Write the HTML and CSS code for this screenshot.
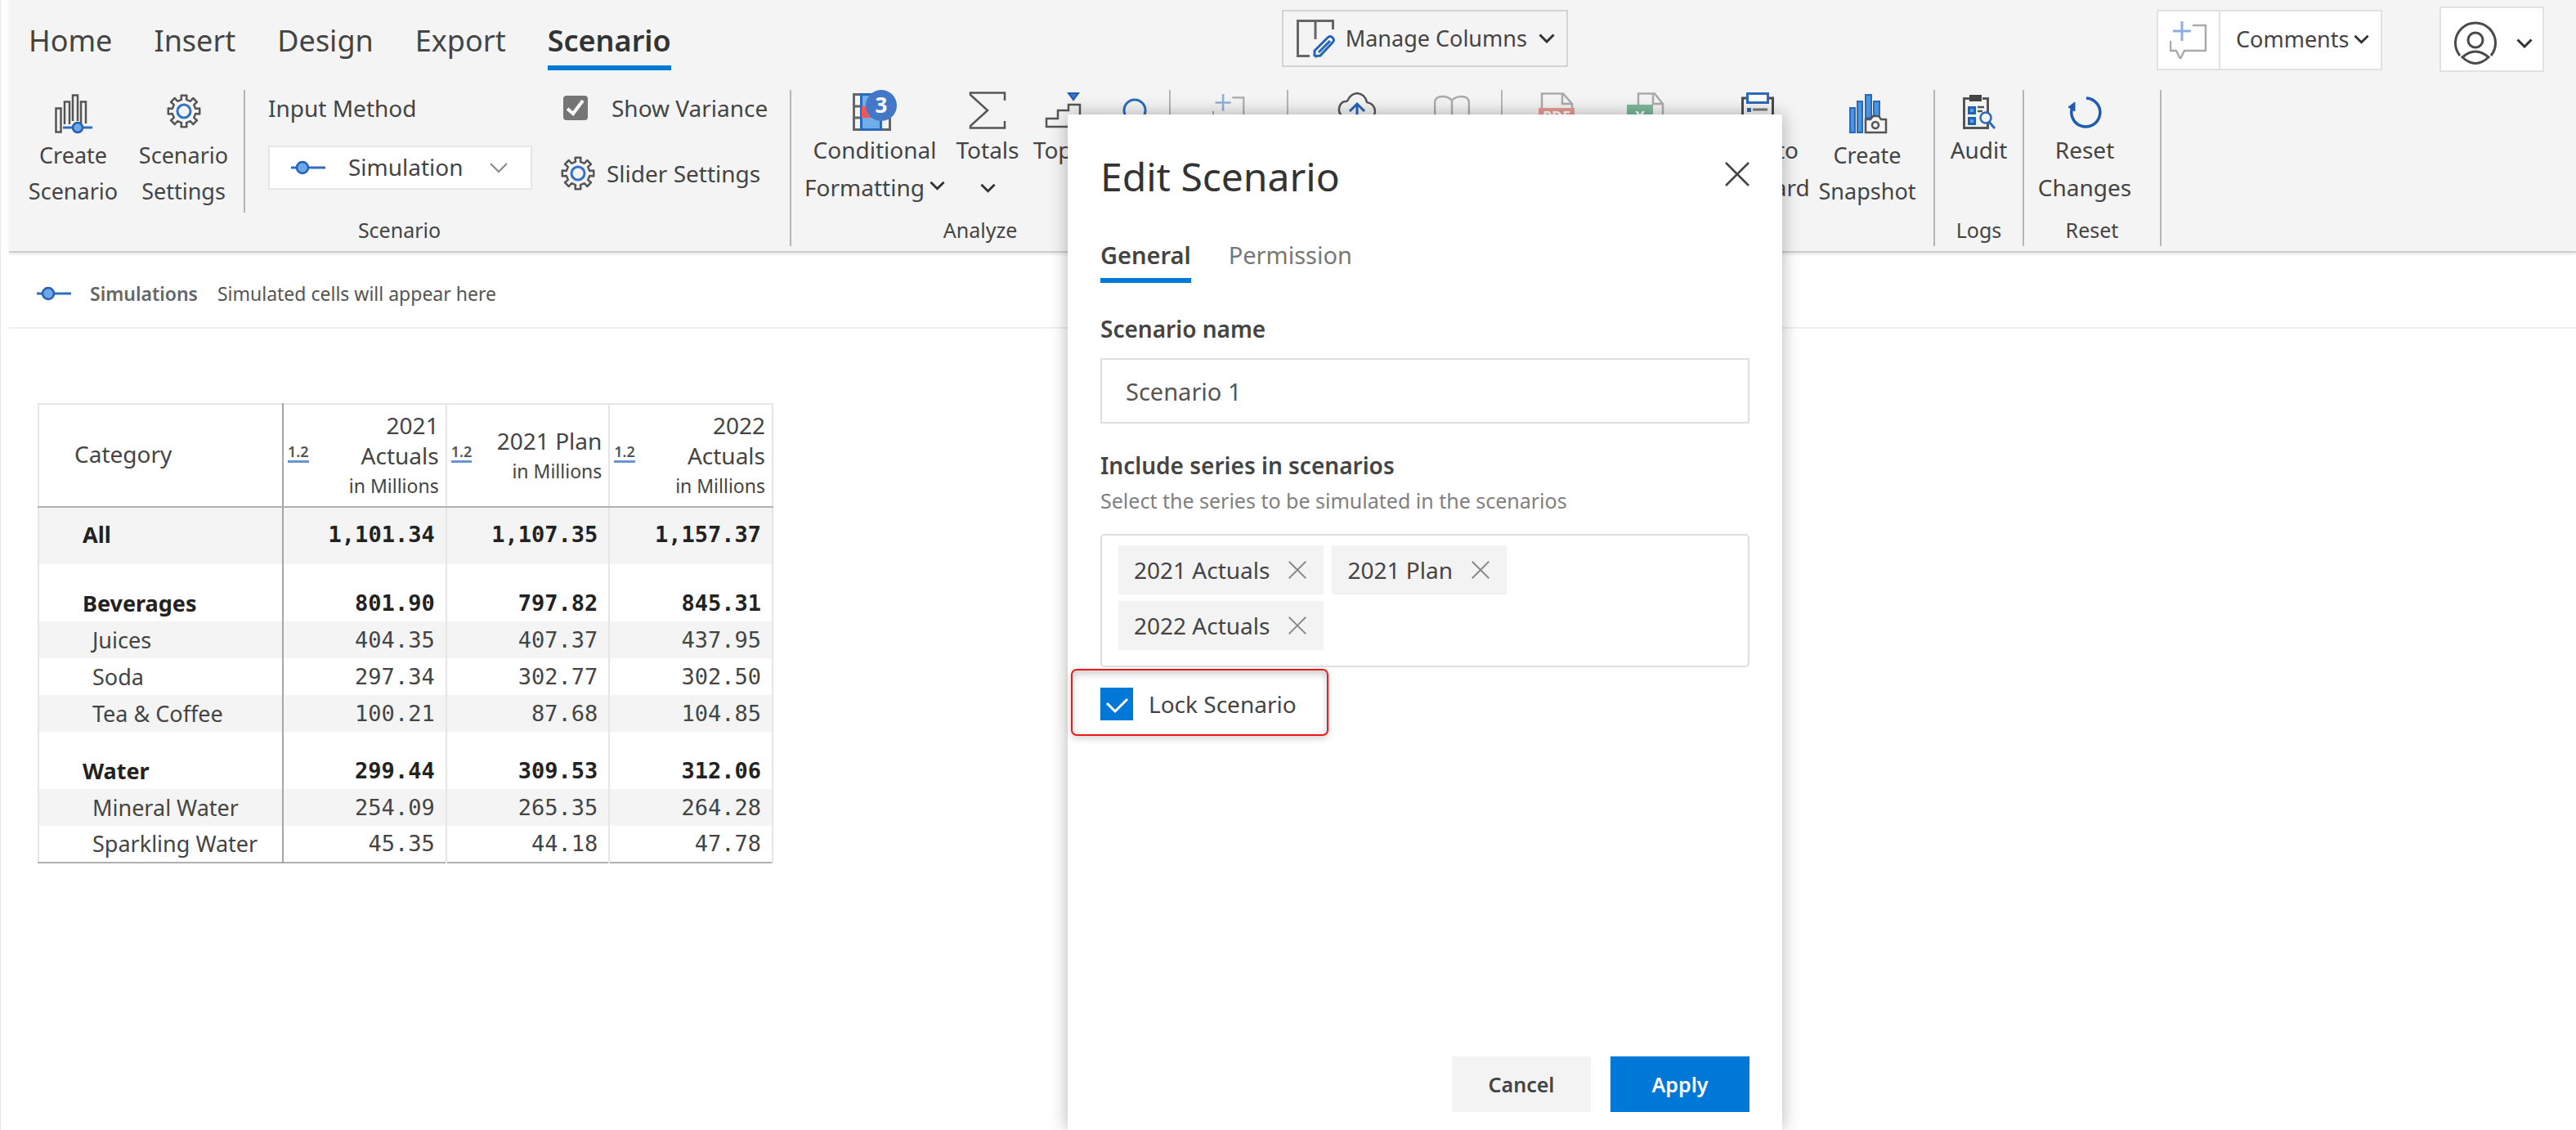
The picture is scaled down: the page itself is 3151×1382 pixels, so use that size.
FILE: index.html
```html
<!DOCTYPE html>
<html lang="en">
<head>
<meta charset="utf-8">
<title>Edit Scenario</title>
<link rel="stylesheet" href="styles.css">
</head>
<body>
<svg class="defs" aria-hidden="true">
  <symbol id="chevron" viewBox="0 0 20 12"><path d="M1.500 1.500 10 10l8.500-8.500" fill="none" stroke="currentColor" stroke-width="3"/></symbol>
  <symbol id="cross" viewBox="0 0 30 30"><path d="M1 1l28 28M29 1 1 29" fill="none" stroke="currentColor" stroke-width="2.500"/></symbol>
  <symbol id="slider" viewBox="0 0 42 18"><path d="M0 9h42" stroke="#2f6dc0" stroke-width="3"/><circle cx="14" cy="9" r="7" fill="#6aa8e8" stroke="#2560b4" stroke-width="2.500"/></symbol>
  <symbol id="gear" viewBox="0 0 42 42"><path d="M18 6.800 17.600 1.800 24.400 1.800 24 6.800 28.900 8.800 32.200 5 37 9.800 33.200 13.100 35.200 18 40.200 17.600 40.200 24.400 35.200 24 33.200 28.900 37 32.200 32.200 37 28.900 33.200 24 35.200 24.400 40.200 17.600 40.200 18 35.200 13.100 33.200 9.800 37 5 32.200 8.800 28.900 6.800 24 1.800 24.400 1.800 17.600 6.800 18 8.800 13.100 5 9.800 9.800 5 13.100 8.800z" fill="none" stroke="#555" stroke-width="2.500" stroke-linejoin="round"/><circle cx="21" cy="21" r="8" fill="none" stroke="#3272c4" stroke-width="3"/></symbol>
  <symbol id="comment-plus" viewBox="0 0 46 46"><path d="M28 5h16v31H18l-5 10-5-10H1V24" fill="none" stroke="#aaa" stroke-width="2.500"/><path d="M15 0v24M4 12h22" stroke="#8fb0dc" stroke-width="3"/></symbol>
</svg>

<header class="ribbon">
  <div class="topbar">
    <nav class="tabs" aria-label="Ribbon">
      <a href="#home">Home</a>
      <a href="#insert">Insert</a>
      <a href="#design">Design</a>
      <a href="#export">Export</a>
      <a href="#scenario" class="active">Scenario</a>
    </nav>
    <button class="manage">
      <svg width="46" height="46" viewBox="0 0 46 46"><path d="M16 44.500H1.500v-43h43V12M23 2v22" fill="none" stroke="#666" stroke-width="3"/><path d="M22 45v-7l16-16q3-3 6 0t0 6L29 44l-7 1M27 40l14-14" fill="none" stroke="#2563b5" stroke-width="3"/></svg>
      <span>Manage Columns</span>
      <svg class="chev" width="20" height="12"><use href="#chevron"/></svg>
    </button>
    <div class="comments">
      <button class="add-comment" aria-label="Add comment"><svg width="46" height="46"><use href="#comment-plus"/></svg></button>
      <button class="comments-menu">Comments <svg class="chev" width="19" height="12"><use href="#chevron"/></svg></button>
    </div>
    <button class="account" aria-label="Account">
      <svg width="52" height="54" viewBox="0 0 52 54"><g fill="none" stroke="#4a4a4a" stroke-width="3"><path d="M7 42a24.500 24.500 0 1 1 38 0"/><circle cx="26" cy="23" r="9"/><path d="M10 44q16-14 32 0-16 15-32 0z"/></g></svg>
      <svg class="chev" width="20" height="12"><use href="#chevron"/></svg>
    </button>
  </div>

  <div class="groups">
    <section class="group g-scenario">
      <div class="tools">
        <button class="tool snug w135"><span class="pic"><svg width="46" height="48" viewBox="0 0 46 48"><g fill="none" stroke="#555" stroke-width="2.500"><path d="M1.500 17.500h6v29h-6zM12 37V9.500h6V37M22 33V1.500h6V33M32 36V9.500h6V36"/></g><path d="M10 41h36" stroke="#2f6dc0" stroke-width="3"/><circle cx="28" cy="41" r="6" fill="#6aa8e8" stroke="#2560b4" stroke-width="2.500"/></svg></span>Create<br>Scenario</button>
        <button class="tool snug w135"><span class="pic up"><svg width="42" height="42"><use href="#gear"/></svg></span>Scenario<br>Settings</button>
        <div class="divider"></div>
        <div class="method">
          <label for="method">Input Method</label>
          <div class="select">
            <svg width="42" height="18"><use href="#slider"/></svg>
            <select id="method"><option>Simulation</option></select>
            <svg width="22" height="12" viewBox="0 0 22 12"><path d="M1 1l10 10L21 1" fill="none" stroke="#888" stroke-width="2"/></svg>
          </div>
        </div>
        <div class="options">
          <label class="check"><input type="checkbox" checked><span>Show Variance</span></label>
          <button class="slider-settings"><svg width="42" height="42"><use href="#gear"/></svg>Slider Settings</button>
        </div>
      </div>
      <h2>Scenario</h2>
    </section>

    <section class="group g-analyze">
      <div class="tools">
        <button class="tool w176"><span class="pic"><svg width="54" height="50" viewBox="0 0 54 50"><path d="M1.500 5.500h44v43h-44zM1 20h44M1 34h44" fill="none" stroke="#666" stroke-width="3"/><path d="M10.500 5.500h24v43h-24z" fill="#6faee8" stroke="#2a69bc" stroke-width="3"/><path d="M11 20h22v14H11z" fill="#f0595c"/><circle cx="35" cy="19" r="19" fill="#4377c8"/><text x="35" y="28" text-anchor="middle" class="badge">3</text></svg></span>Conditional<br><span class="line">Formatting<svg class="chev" width="19" height="12"><use href="#chevron"/></svg></span></button>
        <button class="tool w100"><span class="pic"><svg width="46" height="46" viewBox="0 0 46 46"><path d="M44 11V1.500H2V4l21 19L2 42v2.500h42V36" fill="none" stroke="#555" stroke-width="2.500"/></svg></span>Totals<br><svg class="chev" width="19" height="12"><use href="#chevron"/></svg></button>
        <button class="tool w84"><span class="pic"><svg width="44" height="44" viewBox="0 0 44 44"><path d="M2 42V32h14V22h13V15h14v27z" fill="none" stroke="#555" stroke-width="2.500"/><path d="M29 1h12l-6 8z" fill="#3a76c6" stroke="#1f5cb0" stroke-width="2"/></svg></span>Top n</button>
        <button class="tool w92" aria-label="Search"><span class="pic"><svg width="40" height="30" viewBox="0 0 40 30"><circle cx="20" cy="15" r="13" fill="none" stroke="#2a69bc" stroke-width="3"/></svg></span></button>
      </div>
      <h2>Analyze</h2>
    </section>

    <section class="group g-note">
      <div class="tools center"><button class="tool w92" aria-label="Add note"><span class="pic"><svg width="40" height="40"><use href="#comment-plus"/></svg></span></button></div>
    </section>

    <section class="group g-publish">
      <div class="tools">
        <button class="tool w116" aria-label="Upload"><span class="pic"><svg width="46" height="44" viewBox="0 0 46 44"><path d="M12 32q-12-2-11-13 2-8 8-8 2 0 3-2Q15 2 23 1q10 1 12 11 10 2 10 12-1 8-10 8" fill="none" stroke="#555" stroke-width="2.500"/><path d="M23 42V14M14 23l9-9 9 9" fill="none" stroke="#2563b5" stroke-width="3"/></svg></span></button>
        <button class="tool w116" aria-label="Guide"><span class="pic"><svg width="46" height="36" viewBox="0 0 46 38"><path d="M23 36V6Q18 1 11 1 1 1 1 9v27h44V9q0-8-10-8-7 0-12 5" fill="none" stroke="#aaa" stroke-width="2.500"/></svg></span></button>
      </div>
    </section>

    <section class="group g-export">
      <div class="tools">
        <button class="tool w108" aria-label="Export PDF"><span class="pic"><svg width="46" height="44" viewBox="0 0 46 44"><path d="M5 19V1.500h26L42 14v5M30 2v12h12" fill="none" stroke="#aaa" stroke-width="2.500"/><path d="M1 19h44v22H1z" fill="#e79a94"/><text x="23" y="36" text-anchor="middle" class="file-type">PDF</text></svg></span></button>
        <button class="tool w108" aria-label="Export Excel"><span class="pic"><svg width="46" height="44" viewBox="0 0 46 44"><path d="M15 15V1.500h20L45 14v28H15M33 2v12h12" fill="none" stroke="#aaa" stroke-width="2.500"/><path d="M1 15h32v26H1z" fill="#7cb99a"/><text x="17" y="36" text-anchor="middle" class="file-type">X</text></svg></span></button>
        <button class="tool clipboard w148"><span class="pic"><svg width="40" height="44" viewBox="0 0 40 44"><path d="M7 7H1.500v36h37V7H33" fill="none" stroke="#4a4a4a" stroke-width="3"/><path d="M7.500 1.500h25v11h-25z" fill="#fff" stroke="#2a69bc" stroke-width="3"/><path d="M7 19h5v5H7z" fill="#2a69bc"/><path d="M14 21h18M14 32h18" stroke="#777" stroke-width="3"/></svg></span>Copy to<br>Clipboard</button>
        <button class="tool snug w120"><span class="pic"><svg width="46" height="48" viewBox="0 0 46 48"><g fill="#4a94e0" stroke="#2a69bc" stroke-width="2"><path d="M2 17h6v30H2zM11 9h6v38h-6zM21 1h7v28h-7zM31 9h7v18h-7z"/></g><path d="M21 31h6l3-4h7l3 4h6v16H21z" fill="#f4f4f4" stroke="#555" stroke-width="2.500"/><circle cx="33" cy="38" r="4" fill="none" stroke="#555" stroke-width="2.500"/></svg></span>Create<br>Snapshot</button>
      </div>
    </section>

    <section class="group g-logs">
      <div class="tools center"><button class="tool w92"><span class="pic low"><svg width="40" height="42" viewBox="0 0 40 42"><path d="M8 4.500H1.500v36h29V4.500H24" fill="none" stroke="#555" stroke-width="3"/><path d="M8 0h15v8H8z" fill="#444"/><path d="M7.500 15.500h7v7h-7zM7.500 28.500h7v7h-7z" fill="#5ba2ea" stroke="#2060b8" stroke-width="3"/><path d="M18 15h8M18 20h6" stroke="#555" stroke-width="2.500"/><circle cx="28" cy="28" r="6.500" fill="#f4f4f4" stroke="#2a69bc" stroke-width="2.500"/><path d="M32 33l7 8" stroke="#2a69bc" stroke-width="3"/></svg></span>Audit</button></div>
      <h2>Logs</h2>
    </section>

    <section class="group g-reset">
      <div class="tools"><button class="tool w148"><span class="pic low"><svg width="40" height="40" viewBox="0 0 40 40"><path d="M22 3a17.500 17.500 0 1 1-16 9" fill="none" stroke="#1d5cb0" stroke-width="3.500"/><path d="M0 14 8 8v11z" fill="#1d5cb0" stroke="#1d5cb0"/></svg></span>Reset<br>Changes</button></div>
      <h2>Reset</h2>
    </section>
  </div>
</header>

<div class="sim-bar">
  <svg width="42" height="18"><use href="#slider"/></svg>
  <strong>Simulations</strong>
  <span>Simulated cells will appear here</span>
</div>

<main>
  <table>
    <colgroup><col class="c-name"><col class="c-num"><col class="c-num"><col class="c-num"></colgroup>
    <thead>
      <tr>
        <th scope="col">Category</th>
        <th scope="col"><div class="head"><span class="fmt">1.2</span><span class="series">2021<br>Actuals<small>in Millions</small></span></div></th>
        <th scope="col"><div class="head"><span class="fmt">1.2</span><span class="series">2021 Plan<small>in Millions</small></span></div></th>
        <th scope="col"><div class="head"><span class="fmt">1.2</span><span class="series">2022<br>Actuals<small>in Millions</small></span></div></th>
      </tr>
    </thead>
    <tbody>
      <tr class="total shade"><th scope="row">All</th><td>1,101.34</td><td>1,107.35</td><td>1,157.37</td></tr>
      <tr class="sum"><th scope="row">Beverages</th><td>801.90</td><td>797.82</td><td>845.31</td></tr>
      <tr class="shade"><th scope="row">Juices</th><td>404.35</td><td>407.37</td><td>437.95</td></tr>
      <tr><th scope="row">Soda</th><td>297.34</td><td>302.77</td><td>302.50</td></tr>
      <tr class="shade"><th scope="row">Tea &amp; Coffee</th><td>100.21</td><td>87.68</td><td>104.85</td></tr>
      <tr class="sum"><th scope="row">Water</th><td>299.44</td><td>309.53</td><td>312.06</td></tr>
      <tr class="shade"><th scope="row">Mineral Water</th><td>254.09</td><td>265.35</td><td>264.28</td></tr>
      <tr><th scope="row">Sparkling Water</th><td>45.35</td><td>44.18</td><td>47.78</td></tr>
    </tbody>
  </table>
</main>

<div class="dialog" role="dialog" aria-labelledby="dialog-title">
  <div class="dialog-head">
    <h1 id="dialog-title">Edit Scenario</h1>
    <button class="close" aria-label="Close"><svg width="30" height="30"><use href="#cross"/></svg></button>
  </div>
  <nav class="dialog-tabs" aria-label="Sections">
    <a href="#general" class="active">General</a>
    <a href="#permission">Permission</a>
  </nav>
  <label class="field-label" for="name">Scenario name</label>
  <input id="name" class="name" type="text" value="Scenario 1">
  <h3 class="field-label">Include series in scenarios</h3>
  <p>Select the series to be simulated in the scenarios</p>
  <div class="chips">
    <span class="chip">2021 Actuals<button aria-label="Remove 2021 Actuals"><svg width="22" height="22"><use href="#cross"/></svg></button></span>
    <span class="chip">2021 Plan<button aria-label="Remove 2021 Plan"><svg width="22" height="22"><use href="#cross"/></svg></button></span>
    <span class="chip">2022 Actuals<button aria-label="Remove 2022 Actuals"><svg width="22" height="22"><use href="#cross"/></svg></button></span>
  </div>
  <label class="lock"><input type="checkbox" checked><span>Lock Scenario</span></label>
  <div class="actions">
    <button>Cancel</button>
    <button class="primary">Apply</button>
  </div>
</div>
</body>
</html>
```
FILE: styles.css
```css
* { box-sizing: border-box; }
body {
  margin: 0;
  min-height: 100vh;
  padding-left: 10px;
  background: #fff;
  border-left: 1px solid #e6e6e6;
  color: #444;
  font: 27px/44px "Noto Sans", "Open Sans", sans-serif;
}
.defs { position: absolute; width: 0; height: 0; }
svg { display: block; flex: none; overflow: visible; }
h1, h2, h3, p { margin: 0; font-weight: 400; }
a { color: inherit; text-decoration: none; }
button {
  margin: 0; padding: 0; border: 0; background: none;
  color: inherit; font: inherit; cursor: pointer;
}
.chev { color: #333; }

/* Ribbon */
.ribbon {
  background: #f4f4f4;
  border-bottom: 2px solid #cfcfcf;
  box-shadow: 0 2px 3px rgba(0, 0, 0, .1);
  padding-bottom: 6px;
}
.topbar { display: flex; align-items: flex-start; height: 110px; padding: 8px 39px 0 24px; }
.tabs { display: flex; gap: 51px; padding-top: 18px; font-size: 36px; line-height: 48px; }
.tabs a { padding-bottom: 6px; border-bottom: 6px solid transparent; }
.tabs .active { color: #333; font-weight: 600; border-color: #0078d7; }
.manage {
  display: flex; align-items: center; gap: 14px;
  margin: 4px 0 0 747px; padding: 0 16px; width: 350px; height: 70px;
  border: 2px solid #d3d3d3; white-space: nowrap;
}
.manage .chev { margin-left: auto; }
.comments { display: flex; height: 74px; margin: 4px 70px 0 auto; background: #fff; border: 2px solid #e2e2e2; }
.add-comment { display: grid; place-items: center; width: 76px; border-right: 2px solid #e2e2e2; }
.comments-menu { display: flex; align-items: center; gap: 6px; width: 196px; padding: 0 0 2px 19px; }
.account {
  display: flex; align-items: center; justify-content: space-between;
  width: 128px; height: 80px; padding: 10px 12px 0 16px;
  background: #fff; border: 2px solid #e2e2e2;
}

.groups { display: flex; }
.group {
  display: flex; flex-direction: column; flex: none;
  height: 191px; border-right: 2px solid #b5b5b5;
}
.group h2 { margin-top: auto; text-align: center; font-size: 25px; line-height: 40px; }
.tools { display: flex; }
.center { justify-content: center; }
.tool { display: block; flex: none; font-size: 28px; line-height: 46px; text-align: center; white-space: nowrap; align-self: flex-start; }
.tool .pic { display: flex; align-items: center; justify-content: center; height: 50px; }
.tool .pic.low { padding-top: 4px; }
.tool.snug { font-size: 27px; line-height: 44px; }
.tool.snug .pic { height: 58px; }
.tool.snug .pic.up { padding-bottom: 6px; }
.tool .chev { display: inline-block; margin-bottom: 4px; }
.tool .line { display: inline-flex; align-items: center; gap: 6px; height: 46px; }
.w84 { width: 84px; }
.w92 { width: 92px; }
.w100 { width: 100px; }
.w108 { width: 108px; }
.w116 { width: 116px; }
.w120 { width: 120px; }
.w135 { width: 135px; }
.w148 { width: 148px; }
.w176 { width: 176px; }
.badge { font-size: 26px; font-weight: 700; fill: #fff; }
.file-type { font-size: 18px; font-weight: 700; fill: #fff; }

.g-scenario { width: 957px; }
.g-scenario .tools { padding-left: 11px; }
.g-analyze { width: 464px; }
.g-analyze .tools { padding-left: 14px; }
.g-note { width: 144px; }
.g-publish { width: 262px; }
.g-publish .tools { padding-left: 26px; }
.g-export { width: 529px; }
.g-export .tools { padding-left: 12px; }
.clipboard { margin-left: 10px; }
.g-logs { width: 109px; }
.g-reset { width: 168px; }

.divider { width: 2px; height: 150px; margin-left: 6px; background: #b5b5b5; }
.method { display: flex; flex-direction: column; gap: 24px; width: 323px; margin-left: 28px; font-size: 28px; }
.select {
  display: flex; align-items: center; gap: 28px;
  height: 54px; padding: 0 28px 0 26px;
  background: #fff; border: 2px solid #e6e6e6;
}
.select select {
  flex: 1; min-width: 0; padding: 0 0 2px; border: 0; background: none;
  appearance: none; color: inherit; font: inherit;
}
.options { display: flex; flex-direction: column; gap: 36px; margin-left: 35px; font-size: 28px; }
.check { display: flex; align-items: center; gap: 29px; padding-left: 3px; }
input[type="checkbox"] {
  flex: none; margin: 0; appearance: none; width: 30px; height: 30px; border-radius: 4px;
  background: #757575 url("data:image/svg+xml,%3Csvg xmlns='http://www.w3.org/2000/svg' viewBox='0 0 30 30'%3E%3Cpath d='M5 16l7 6L24 6' fill='none' stroke='%23fff' stroke-width='4'/%3E%3C/svg%3E") center / 100% 100%;
}
.slider-settings { display: flex; align-items: center; gap: 14px; white-space: nowrap; }

/* Simulation summary */
.sim-bar {
  display: flex; align-items: center;
  height: 93px; padding: 8px 0 0 34px;
  border-bottom: 2px solid #efefef;
  color: #555; font-size: 23px;
}
.sim-bar strong { margin: 0 24px 0 23px; font-weight: 600; color: #666; }

/* Data table */
main { padding: 91px 0 0 35px; }
table { width: 900px; table-layout: fixed; border-collapse: collapse; border: 2px solid #e6e6e6; border-bottom-color: #b0b0b0; }
.c-name { width: 299px; }
th, td { height: 45px; padding: 0; border-right: 2px solid #e6e6e6; line-height: 44px; white-space: nowrap; }
th { text-align: left; font-weight: 400; }
th:first-child { border-right-color: #a6a6a6; }
thead th { height: 126px; border-bottom: 2px solid #b0b0b0; }
thead th:first-child { padding: 0 0 4px 43px; font-size: 28px; }
.head { display: flex; align-items: center; justify-content: space-between; padding: 0 8px 0 5px; }
.fmt { margin-bottom: 8px; border-bottom: 3px solid #6796d2; font-size: 18px; line-height: 22px; font-weight: 600; color: #555; }
.series { font-size: 28px; line-height: 37px; text-align: right; }
.series small { display: block; font-size: 23px; line-height: 36px; }
tbody th { padding-left: 65px; }
td { padding-right: 13px; text-align: right; font-family: "DejaVu Sans Mono", "Liberation Mono", monospace; }
.shade { background: #f4f4f4; }
.total > *, .sum > * { height: 70px; color: #222; font-weight: 700; }
.total > * { padding-bottom: 4px; }
.total th, .sum th { padding-left: 53px; }
.sum > * { padding-top: 25px; }

/* Dialog */
.dialog {
  position: absolute; top: 140px; bottom: 0; left: 1306px; width: 874px;
  display: flex; flex-direction: column;
  padding: 0 40px;
  background: #fff; box-shadow: 0 0 20px rgba(0, 0, 0, .3);
  font-size: 28px;
}
.dialog-head { display: flex; align-items: flex-start; justify-content: space-between; padding-top: 44px; }
.dialog-head h1 { color: #333; font-size: 48px; line-height: 64px; }
.close { padding-top: 14px; }
.dialog-tabs { display: flex; gap: 46px; padding-top: 42px; font-size: 29px; line-height: 44px; color: #777; }
.dialog-tabs a { padding-bottom: 6px; border-bottom: 6px solid transparent; }
.dialog-tabs .active { color: #444; font-weight: 600; border-color: #0078d7; }
.field-label { margin-top: 34px; font-size: 28px; font-weight: 600; }
.name {
  height: 80px; margin-top: 14px; padding: 0 29px;
  border: 2px solid #dedede; background: #fff;
  color: #555; font: inherit; font-size: 29px;
}
.name + .field-label { margin-top: 29px; }
.dialog p { color: #808080; font-size: 25px; line-height: 42px; }
.chips {
  display: flex; flex-wrap: wrap; gap: 8px 10px;
  height: 163px; margin-top: 20px; padding: 12px 80px 12px 20px;
  align-content: flex-start;
  border: 2px solid #dedede; border-radius: 5px;
}
.chip { display: flex; align-items: center; gap: 23px; height: 60px; padding: 0 21px 0 19px; background: #f3f3f3; white-space: nowrap; }
.chip button { color: #888; }
.lock {
  display: flex; align-items: center; align-self: flex-start; gap: 19px;
  height: 82px; margin: 2px 0 0 -36px; padding: 4px 37px 0 34px;
  border: 2px solid #f01818; border-radius: 7px;
  box-shadow: 0 4px 8px rgba(0, 0, 0, .15), inset 0 4px 10px rgba(0, 0, 0, .2);
}
.lock input[type="checkbox"] {
  width: 40px; height: 40px; border-radius: 0; background-color: #0078d7;
  background-image: url("data:image/svg+xml,%3Csvg xmlns='http://www.w3.org/2000/svg' viewBox='0 0 40 40'%3E%3Cpath d='M8 19l10 10L33 14' fill='none' stroke='%23fff' stroke-width='3'/%3E%3C/svg%3E");
}
.actions { display: flex; justify-content: flex-end; gap: 24px; margin-top: auto; padding-bottom: 22px; }
.actions button { width: 170px; height: 68px; background: #f3f3f3; font-size: 25px; font-weight: 600; }
.actions .primary { background: #0078d7; color: #fff; }
```
